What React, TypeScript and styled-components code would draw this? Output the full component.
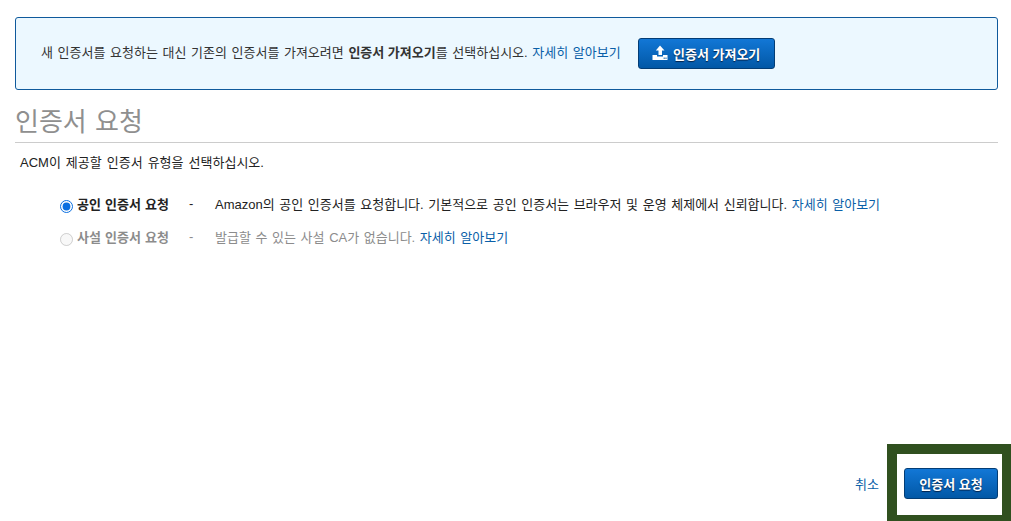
import React from 'react';
import styled, { createGlobalStyle } from 'styled-components';

const GlobalStyle = createGlobalStyle`
  html, body {
    margin: 0;
    padding: 0;
    background: #fff;
    overflow: hidden;
  }
  body {
    font-family: "Liberation Sans", "Noto Sans CJK KR", sans-serif;
    font-size: 13px;
    word-spacing: 1px;
    color: #333;
  }
`;

const Page = styled.div`
  position: relative;
  box-sizing: border-box;
  width: 1011px;
  height: 521px;
  padding: 17px 13px 0 15px;
  display: flex;
  flex-direction: column;
`;

const Notice = styled.div`
  box-sizing: border-box;
  height: 73px;
  display: flex;
  align-items: center;
  gap: 17px;
  padding: 0 0 1px 25px;
  background: #ecf8ff;
  border: 1px solid #0f5a9c;
  border-radius: 3px;
`;

const NoticeText = styled.span`
  line-height: 18px;

  b {
    word-spacing: 0;
  }
`;

const Link = styled.a`
  color: #0a5fa8;
  text-decoration: none;
  cursor: pointer;
`;

const Button = styled.button<{ $width: number }>`
  box-sizing: border-box;
  width: ${(p) => p.$width}px;
  height: 31px;
  display: inline-flex;
  align-items: center;
  justify-content: center;
  gap: 5px;
  padding: 0;
  font: inherit;
  font-weight: 700;
  word-spacing: 0;
  color: #fff;
  text-shadow: 0 1px 1px rgba(0, 25, 60, 0.9);
  background: linear-gradient(#1277d6, #0258a6);
  border: 1px solid #033d75;
  border-radius: 3px;
  cursor: pointer;
`;

const Heading = styled.h1`
  margin: 14px 0 0;
  padding: 2px 0 4px;
  height: 32px;
  font-size: 26px;
  line-height: 32px;
  font-weight: 400;
  word-spacing: 1px;
  color: #8f8f8f;
  border-bottom: 1px solid #cccccc;
`;

const Lead = styled.p`
  margin: 11px 0 0 5px;
  line-height: 18px;
  word-spacing: 1.4px;
  color: #222;
`;

const Options = styled.div`
  display: flex;
  flex-direction: column;
  gap: 15px;
  margin: 22px 0 0 45px;
`;

const Option = styled.label<{ $disabled?: boolean }>`
  display: grid;
  grid-template-columns: 17px 112px 26px 1fr;
  align-items: center;
  height: 18px;
  color: ${(p) => (p.$disabled ? '#8c8c8c' : '#222')};
`;

const Radio = styled.input`
  width: 13px;
  height: 13px;
  margin: 5px 0 0;
  accent-color: #0b6fe0;
`;

const OptionName = styled.strong`
  font-weight: 700;
  word-spacing: 0.5px;
`;

const Footer = styled.div`
  margin-top: auto;
  margin-bottom: 22px;
  display: flex;
  justify-content: flex-end;
  align-items: center;
  gap: 25px;
`;

// dark green callout drawn over the primary action
const Callout = styled.div`
  position: absolute;
  box-sizing: border-box;
  left: 887px;
  top: 444px;
  width: 124px;
  height: 77px;
  border-style: solid;
  border-color: #30501f;
  border-width: 10px 9px 6px 10px;
  pointer-events: none;
`;

const UploadIcon = () => (
  <svg width="16" height="16" viewBox="0 0 16 16" aria-hidden="true">
    <path d="M8 0.5 L12.5 5.5 H10 V10 H6.5 V5.5 H3.8 Z" fill="#fff" />
    <path d="M0.5 10 H5 V11.5 H11 V10 H15.5 V15 H0.5 Z" fill="#fff" />
    <rect x="11.6" y="12.6" width="1.2" height="1.2" fill="#0a5fa8" />
    <rect x="13.4" y="12.6" width="1.2" height="1.2" fill="#0a5fa8" />
  </svg>
);

export default function App() {
  return (
    <Page>
      <GlobalStyle />
      <Notice>
        <NoticeText>
          새 인증서를 요청하는 대신 기존의 인증서를 가져오려면 <b>인증서 가져오기</b>를 선택하십시오.{' '}
          <Link>자세히 알아보기</Link>
        </NoticeText>
        <Button $width={137}>
          <UploadIcon />
          인증서 가져오기
        </Button>
      </Notice>

      <Heading>인증서 요청</Heading>
      <Lead>ACM이 제공할 인증서 유형을 선택하십시오.</Lead>

      <Options>
        <Option>
          <Radio type="radio" name="kind" defaultChecked />
          <OptionName>공인 인증서 요청</OptionName>
          <span>-</span>
          <span>
            Amazon의 공인 인증서를 요청합니다. 기본적으로 공인 인증서는 브라우저 및 운영 체제에서 신뢰합니다.{' '}
            <Link>자세히 알아보기</Link>
          </span>
        </Option>
        <Option $disabled>
          <Radio type="radio" name="kind" disabled />
          <OptionName>사설 인증서 요청</OptionName>
          <span>-</span>
          <span>
            발급할 수 있는 사설 CA가 없습니다. <Link>자세히 알아보기</Link>
          </span>
        </Option>
      </Options>

      <Footer>
        <Link>취소</Link>
        <Button $width={94}>인증서 요청</Button>
      </Footer>
      <Callout />
    </Page>
  );
}
